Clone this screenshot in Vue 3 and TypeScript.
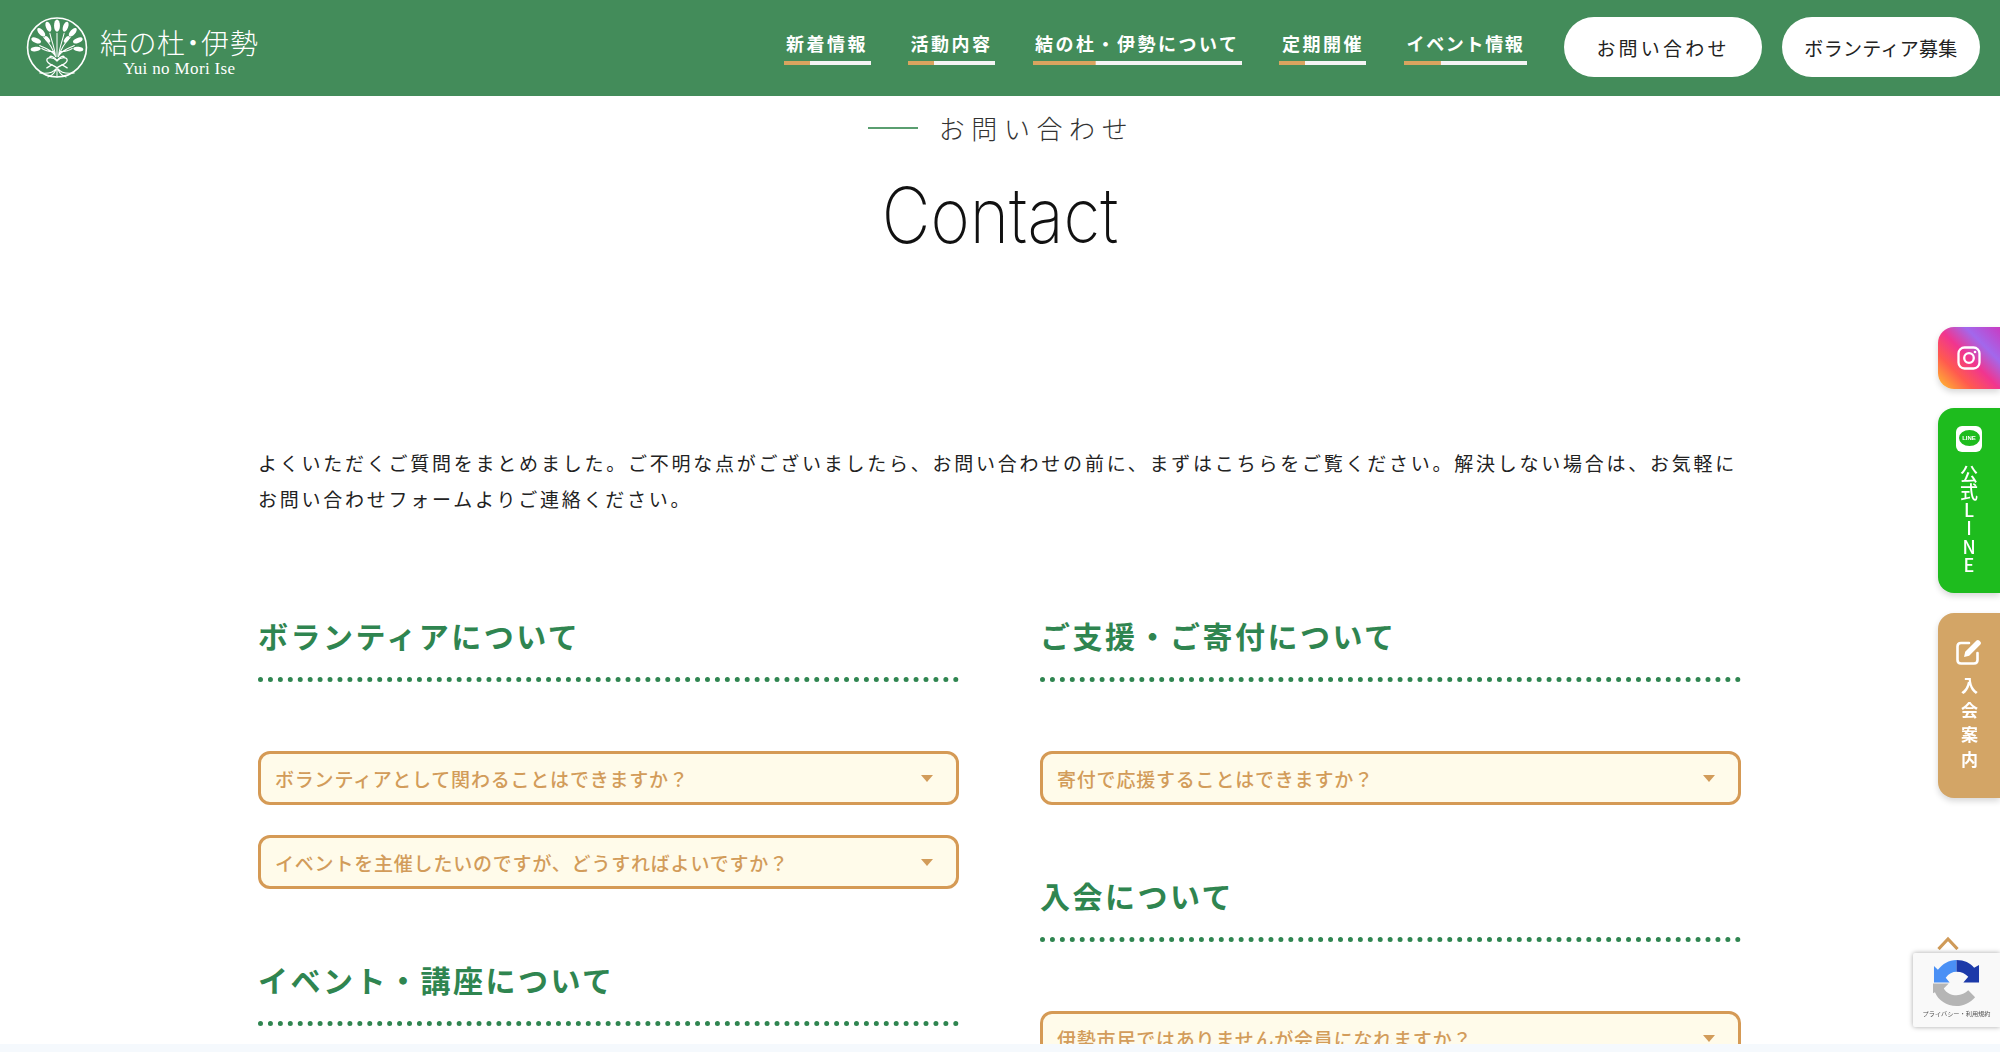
<script setup lang="ts">
interface Nav { label: string; tight?: boolean }
const navs: Nav[] = [
  { label: '新着情報' },
  { label: '活動内容' },
  { label: '結の杜・伊勢について' },
  { label: '定期開催' },
  { label: 'イベント情報', tight: true },
]
interface Section { title: string; items: string[] }
const left: Section[] = [
  { title: 'ボランティアについて', items: ['ボランティアとして関わることはできますか？', 'イベントを主催したいのですが、どうすればよいですか？'] },
  { title: 'イベント・講座について', items: [] },
]
const right: Section[] = [
  { title: 'ご支援・ご寄付について', items: ['寄付で応援することはできますか？'] },
  { title: '入会について', items: ['伊勢市民ではありませんが会員になれますか？'] },
]
const columns: Section[][] = [left, right]
// x, y, rotation, half-width, half-height
const leaves: number[][] = [
  [30, 10.5, 0, 2.9, 6],
  [21.5, 11.5, -20, 2.5, 5.2], [38.5, 11.5, 20, 2.5, 5.2],
  [14.5, 17, -42, 2.5, 5.2], [45.5, 17, 42, 2.5, 5.2],
  [9.5, 25, -68, 2.4, 5], [50.5, 25, 68, 2.4, 5],
  [9, 33.5, -98, 2.2, 5], [51, 33.5, 98, 2.2, 5],
  [20.5, 24, -38, 1.9, 3.8], [39.5, 24, 38, 1.9, 3.8],
]
</script>

<template>
  <div class="page">
    <header class="header">
      <a class="logo">
        <svg class="logo-mark" viewBox="0 0 60 64" width="62" height="65">
          <circle cx="30" cy="32" r="29" fill="none" stroke="#fff" stroke-width="1.6" />
          <g fill="#fff">
            <ellipse v-for="(l, i) in leaves" :key="i" cx="0" cy="0" :rx="l[3]" :ry="l[4]"
              :transform="`translate(${l[0]} ${l[1]}) rotate(${l[2]})`" />
          </g>
          <g fill="none" stroke="#fff" stroke-width="1" stroke-linecap="round">
            <path d="M30 41V18M28.5 41C28 34 26 30 23 18M31.5 41C32 34 34 30 37 18M28 40C26 33 22 27 17 22M32 40C34 33 38 27 43 22M27.5 39C24 34 19 33 13 30M32.5 39C36 34 41 33 47 30M26 36C21 36 18 35 15 33M34 36C39 36 42 35 45 33" />
            <path d="M30 52C26 49 20 48 20 44.5C20 41 26 41 30 45C34 41 40 41 40 44.5C40 48 34 49 30 52Z" stroke-width="1.3" />
            <path d="M30 45C27 41 24 40 23 41M30 45C33 41 36 40 37 41M25 49L20 52M35 49L40 52" stroke-width="1.3" />
            <path d="M30 52V55M29 53C26 57 20 58 13 57M31 53C34 57 40 58 47 57M29 54C27 58 25 60 21 61M31 54C33 58 35 60 39 61M30 55V61" />
          </g>
        </svg>
        <span class="logo-text">
          <span class="logo-ja">結の杜・伊勢</span>
          <span class="logo-en">Yui no Mori Ise</span>
        </span>
      </a>
      <nav class="nav">
        <a v-for="n in navs" :key="n.label" class="nav-link" :class="{ tight: n.tight }">{{ n.label }}</a>
      </nav>
      <div class="buttons">
        <a class="pill pill-contact">お問い合わせ</a>
        <a class="pill pill-vol">ボランティア募集</a>
      </div>
    </header>

    <main>
      <div class="title">
        <p class="title-ja"><span class="title-rule"></span>お問い合わせ</p>
        <h1 class="title-en">Contact</h1>
      </div>

      <div class="content">
        <p class="lead">よくいただくご質問をまとめました。ご不明な点がございましたら、お問い合わせの前に、まずはこちらをご覧ください。解決しない場合は、お気軽にお問い合わせフォームよりご連絡ください。</p>

        <div class="faq-grid">
          <div v-for="(col, ci) in columns" :key="ci" class="faq-col">
            <section v-for="s in col" :key="s.title" class="faq-section">
              <h2 class="faq-title">{{ s.title }}</h2>
              <div class="faq-list">
                <div v-for="q in s.items" :key="q" class="faq-item">
                  <span>{{ q }}</span>
                  <i class="caret"></i>
                </div>
              </div>
            </section>
          </div>
        </div>
      </div>
    </main>

    <aside class="side">
      <a class="side-tab insta">
        <svg viewBox="0 0 24 24" width="24" height="24" fill="none" stroke="#fff" stroke-width="2.3">
          <rect x="1.5" y="1.5" width="21" height="21" rx="6" />
          <circle cx="12" cy="12" r="4.8" />
          <circle cx="18" cy="6" r="1.3" fill="#fff" stroke="none" />
        </svg>
      </a>
      <a class="side-tab line">
        <span class="line-icon"><span class="line-bubble">LINE</span></span>
        <span class="vert vert-line">公式LINE</span>
      </a>
      <a class="side-tab join">
        <svg viewBox="0 0 26 27" width="26" height="27" fill="none" stroke="#fff" stroke-width="2.6" stroke-linecap="round">
          <path d="M13 5H5C2.8 5 1.5 6.3 1.5 8.5V22C1.5 24.2 2.8 25.5 5 25.5H18C20.2 25.5 21.5 24.2 21.5 22V15" />
          <path d="M8 19L9.2 13.8L20.5 2.5C21.3 1.7 22.4 1.7 23.2 2.5L24.4 3.7C25.2 4.5 25.2 5.6 24.4 6.4L13.2 17.8Z" fill="#fff" stroke="none" />
        </svg>
        <span class="vert vert-join">入会案内</span>
      </a>
    </aside>

    <svg class="to-top" viewBox="0 0 22 14" width="22" height="14" fill="none" stroke="#cf9a58" stroke-width="3.2">
      <path d="M1.5 13L11 3L20.5 13" />
    </svg>

    <div class="recaptcha">
      <svg viewBox="0 0 48 48" width="47" height="47">
        <path d="M24 0L24 12C20 12 16 14 13 18L17 23H1V6L5 10C10 4 16 0 24 0Z" fill="#4a90f5" />
        <path d="M24 0H24C32 0 38 3 42 8L47 5V23H31L36 17C33 14 29 12 24 12Z" fill="#1c3aa9" />
        <path d="M0 24H16L11 29C14 34 19 36 24 36C29 36 33 34 36 31L43 38C38 44 31 47 24 47C14 47 5 41 2 33L0 34Z" fill="#b5b5b5" />
      </svg>
      <span class="rc-links">プライバシー・利用規約</span>
    </div>

    <div class="bottom-band"></div>
  </div>
</template>

<style>
html, body { margin: 0; background: #fff; overflow: hidden; }
</style>

<style scoped>
.page {
  height: 1052px;
  overflow: hidden;
  font-family: "Noto Sans CJK JP", "Noto Sans", sans-serif;
  color: #222;
}
.header {
  height: 96px;
  background: #438c5a;
  display: flex;
  align-items: center;
  padding: 0 20px 0 26px;
  box-sizing: border-box;
}
.logo { display: flex; align-items: center; gap: 12px; margin-top: -1px; }
.logo-mark { display: block; }
.logo-text { display: flex; flex-direction: column; color: #fff; padding-top: 10px; }
.logo-ja {
  font-size: 28px;
  line-height: 32px;
  font-weight: 300;
  letter-spacing: 1px;
  font-feature-settings: "palt";
  white-space: nowrap;
}
.logo-en {
  font-family: "Liberation Serif", serif;
  font-size: 17px;
  line-height: 20px;
  letter-spacing: 0.35px;
  margin-left: 23px;
  margin-top: 1px;
}
.nav { display: flex; gap: 37.5px; margin-left: auto; margin-top: -2px; }
.nav-link {
  display: block;
  padding: 0 2.5px 9px;
  font-size: 18px;
  line-height: 26px;
  font-weight: 700;
  letter-spacing: 2.5px;
  color: #fff;
  white-space: nowrap;
  background:
    linear-gradient(#d9a45f, #d9a45f) left bottom / 30% 4px no-repeat,
    linear-gradient(#f4f4f4, #f4f4f4) left bottom / 100% 4px no-repeat;
}
.nav-link.tight { letter-spacing: 1.67px; }
.buttons { display: flex; gap: 20px; margin-left: 37px; margin-top: -2px; }
.pill {
  width: 198px;
  height: 60px;
  border-radius: 30px;
  background: #fff;
  color: #222;
  display: flex;
  align-items: center;
  justify-content: center;
  font-size: 19px;
  font-weight: 400;
  white-space: nowrap;
}
.pill-contact { letter-spacing: 3.2px; }
.pill-vol { letter-spacing: 0.3px; }

.title { text-align: center; }
.title-ja {
  margin: 0;
  padding: 10px 0 0 10px;
  height: 44px;
  display: flex;
  justify-content: center;
  align-items: center;
  gap: 21px;
  font-size: 26px;
  line-height: 44px;
  font-weight: 300;
  letter-spacing: 6.6px;
  color: #333;
  box-sizing: content-box;
}
.title-rule { width: 50px; height: 2px; background: #5a9e70; margin-left: -8px; }
.title-en {
  margin: 23px 0 0;
  font-family: Inter, sans-serif;
  font-weight: 200;
  font-size: 77px;
  line-height: 84px;
  letter-spacing: 0;
  color: #111;
  transform: scaleX(0.87);
}

.content { width: 1484px; margin: 188px auto 0; }
.lead {
  margin: 0;
  font-size: 19px;
  line-height: 36px;
  letter-spacing: 2.76px;
  color: #222;
}
.faq-grid {
  margin-top: 96px;
  display: grid;
  grid-template-columns: 701px 701px;
  column-gap: 81px;
}
.faq-section + .faq-section { margin-top: 68px; }
.faq-title {
  margin: 0 0 69px;
  padding-bottom: 19px;
  border-bottom: 5px dotted #2f8550;
  font-size: 30px;
  line-height: 45px;
  font-weight: 700;
  letter-spacing: 2.5px;
  color: #2f8550;
}
.faq-list { display: flex; flex-direction: column; gap: 30px; }
.faq-item {
  height: 54px;
  box-sizing: border-box;
  border: 3px solid #d59a55;
  border-radius: 12px;
  background: #fffbea;
  display: flex;
  align-items: center;
  justify-content: space-between;
  padding: 0 23px 0 14px;
  font-size: 19px;
  font-weight: 500;
  letter-spacing: 0.8px;
  color: #d29c5a;
}
.caret {
  width: 0;
  height: 0;
  border-left: 6px solid transparent;
  border-right: 6px solid transparent;
  border-top: 7px solid #d29c5a;
}

.side {
  position: fixed;
  right: 0;
  top: 327px;
  width: 62px;
  display: flex;
  flex-direction: column;
  gap: 19px;
}
.side-tab {
  display: flex;
  flex-direction: column;
  align-items: center;
  color: #fff;
  border-radius: 16px 0 0 16px;
  box-shadow: 0 3px 6px rgba(0, 0, 0, 0.16);
}
.insta {
  height: 62px;
  justify-content: center;
  background: linear-gradient(45deg, #ffc22e 0%, #ff5a4f 28%, #f1358f 50%, #a268ec 72%, #c93bc2 100%);
}
.line { height: 185px; background: #1ebc1e; padding-top: 18px; box-sizing: border-box; }
.line-icon {
  width: 26px;
  height: 26px;
  border-radius: 6px;
  background: #fff;
  display: flex;
  align-items: center;
  justify-content: center;
}
.line-bubble {
  width: 21px;
  height: 16px;
  border-radius: 50%;
  background: #1ebc1e;
  color: #fff;
  font-family: "Liberation Sans", sans-serif;
  font-size: 6px;
  font-weight: 700;
  line-height: 16px;
  text-align: center;
  margin-top: -2px;
}
.join { height: 185px; margin-top: 1px; background: #d3a566; padding-top: 25px; box-sizing: border-box; }
.vert {
  writing-mode: vertical-rl;
  text-orientation: upright;
  white-space: nowrap;
}
.vert-line { font-size: 18px; line-height: 18px; font-weight: 500; margin-top: 13px; letter-spacing: 0.2px; }
.vert-join { font-size: 17px; line-height: 18px; font-weight: 700; margin-top: 12px; letter-spacing: 7.6px; }

.to-top { position: fixed; left: 1937px; top: 936px; }
.recaptcha {
  position: fixed;
  left: 1913px;
  top: 953px;
  width: 87px;
  height: 74px;
  box-sizing: border-box;
  background: #f9f9f9;
  box-shadow: 0 0 5px rgba(0, 0, 0, 0.35);
  border-radius: 2px 0 0 2px;
  display: flex;
  flex-direction: column;
  align-items: center;
  padding-top: 7px;
}
.recaptcha svg { display: block; }
.rc-links {
  font-size: 6.2px;
  line-height: 10px;
  margin-top: 2px;
  color: #555;
  white-space: nowrap;
}
.bottom-band {
  position: fixed;
  left: 0;
  right: 0;
  bottom: 0;
  height: 8px;
  background: #f5f9fd;
}
</style>
